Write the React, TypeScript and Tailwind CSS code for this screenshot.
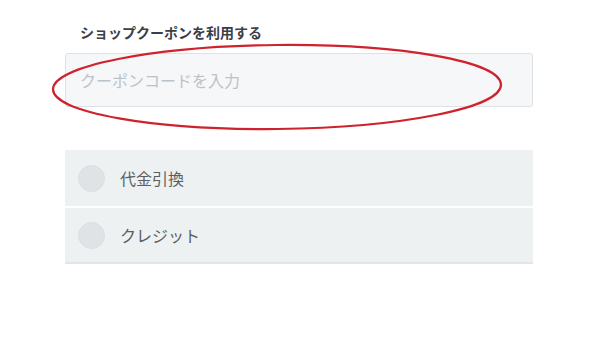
const rows = ["代金引換", "クレジット"];

export default function App() {
  return (
    <div
      className="relative w-[600px] h-[340px] bg-white overflow-hidden"
      style={{ fontFamily: '"Noto Sans CJK JP", "Noto Sans", sans-serif' }}
    >
      <div className="ml-[65px] w-[468px] pt-[22px]">
        <label className="block pl-[15px] text-[14px] leading-[20px] font-bold text-[#3a4047]">
          ショップクーポンを利用する
        </label>
        <input
          type="text"
          placeholder="クーポンコードを入力"
          className="mt-[11px] block w-full h-[54px] px-[14px] rounded-[3px] border border-[#dde1e4] bg-[#f5f7f8] text-[16px] text-[#333] placeholder:text-[#bcc3c8] outline-none"
        />

        <div className="mt-[43px] bg-[#eef1f2] border-b-2 border-[#e2e6e8]">
          {rows.map((r, i) => (
            <div
              key={r}
              className={`flex items-center h-[56px] pl-[13px] gap-[15px] ${i > 0 ? "border-t-2 border-white" : ""}`}
            >
              <span className="w-[27px] h-[27px] rounded-full bg-[#dfe3e6] border border-[#dadfe2]" />
              <span className="text-[16px] text-[#5a5f63]">{r}</span>
            </div>
          ))}
        </div>
      </div>

      <svg
        className="absolute left-0 top-0 pointer-events-none"
        width="600"
        height="340"
        viewBox="0 0 600 340"
      >
        <ellipse
          cx="277"
          cy="87"
          rx="224"
          ry="42"
          fill="none"
          stroke="#d0222c"
          strokeWidth="2.2"
          transform="rotate(-0.6 277 87)"
        />
      </svg>
    </div>
  );
}
